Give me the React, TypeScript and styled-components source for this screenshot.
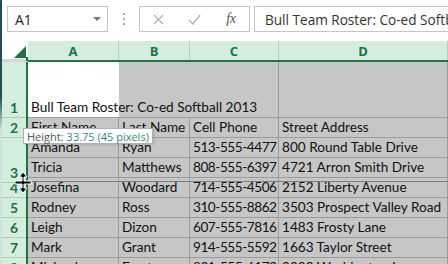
import React from 'react';
import styled, { createGlobalStyle } from 'styled-components';

const GREEN = '#217346';
const MINT = '#d3eedd';
const SEL = '#c6c6c6';
const GRID = '#9c9c9c';

const Global = createGlobalStyle`
  html, body { margin: 0; padding: 0; background: #fff; }
  * { box-sizing: border-box; }
`;

const Frame = styled.div`
  position: relative;
  width: 448px;
  height: 264px;
  overflow: hidden;
  display: flex;
  flex-direction: column;
  padding-left: 2px;
  background-color: #fff;
  background-image: linear-gradient(to bottom, #1e4c5c 0, #1e4c5c 96px, #cfe3d8 130px);
  background-size: 2px 100%;
  background-repeat: no-repeat;
  font-family: 'Open Sans', 'Liberation Sans', sans-serif;
`;

/* ---------- formula bar ---------- */

const FormulaBar = styled.div`
  height: 41px;
  flex: none;
  display: flex;
  align-items: flex-start;
  padding: 6px 0 0 5px;
`;

const Field = styled.div`
  height: 26px;
  border: 1px solid #c6c6c6;
  display: flex;
  align-items: center;
  font-size: 14px;
  color: #262626;
  white-space: nowrap;
  overflow: hidden;
`;

const NameBox = styled(Field)`
  width: 101px;
  justify-content: space-between;
  padding: 0 6px 0 7px;
`;

const Caret = styled.span`
  width: 0;
  height: 0;
  border-left: 4px solid transparent;
  border-right: 4px solid transparent;
  border-top: 4px solid #7a7a7a;
`;

const Grip = styled.div`
  width: 31px;
  height: 26px;
  display: flex;
  flex-direction: column;
  align-items: center;
  justify-content: center;
  gap: 3px;
  span {
    width: 2px;
    height: 2px;
    background: #a9a9a9;
  }
`;

const ButtonsBox = styled(Field)`
  width: 111px;
`;

const IconSlot = styled.div`
  width: 37px;
  height: 100%;
  display: flex;
  align-items: center;
  justify-content: center;
`;

const Fx = styled.span`
  font-family: 'Liberation Serif', 'DejaVu Serif', serif;
  font-style: italic;
  font-size: 14px;
  color: #555;
  letter-spacing: -0.5px;
`;

const FormulaInput = styled(Field)`
  flex: 1;
  margin-left: 4px;
  margin-right: -20px;
  padding-left: 10px;
  font-size: 13.6px;
  color: #333;
`;

/* ---------- sheet ---------- */

const Sheet = styled.div`
  flex: 1;
  display: flex;
  min-height: 0;
`;

const LeftCol = styled.div`
  width: 26px;
  flex: none;
  display: flex;
  flex-direction: column;
`;

const Corner = styled.div`
  position: relative;
  height: 21px;
  flex: none;
  background: #fff;
  border-bottom: 3px solid #d6d6d6;
  display: flex;
  justify-content: flex-end;
  align-items: flex-end;
  padding: 0 2px 1px 0;
  &::after {
    content: '';
    position: absolute;
    right: 0;
    bottom: -2px;
    width: 2px;
    height: 4px;
    background: ${GREEN};
  }
`;

const RowHeads = styled.div`
  flex: 1;
  display: flex;
  flex-direction: column;
  background: ${MINT};
  border-right: 2px solid ${GREEN};
`;

const RowHead = styled.div<{ $h: number }>`
  height: ${(p) => p.$h}px;
  flex: none;
  border-bottom: 1px solid #b3cbbd;
  display: flex;
  align-items: flex-end;
  justify-content: center;
  padding-bottom: 1px;
  font-family: 'Lato', 'Liberation Sans', sans-serif;
  font-weight: 700;
  font-size: 14px;
  line-height: 16px;
  color: ${GREEN};
`;

const Main = styled.div`
  flex: 1;
  min-width: 0;
  display: flex;
  flex-direction: column;
`;

const ColHeads = styled.div`
  height: 21px;
  flex: none;
  display: flex;
  background: ${MINT};
  border-bottom: 2px solid ${GREEN};
`;

const ColHead = styled.div<{ $w?: number }>`
  width: ${(p) => (p.$w ? `${p.$w}px` : 'auto')};
  flex: ${(p) => (p.$w ? 'none' : '1')};
  border-right: 1px solid #b8cdbf;
  display: flex;
  align-items: center;
  justify-content: center;
  font-family: 'Open Sans', 'Liberation Sans', sans-serif;
  font-weight: 700;
  font-size: 13px;
  color: ${GREEN};
`;

const Body = styled.div`
  position: relative;
  flex: 1;
  background: ${SEL};
  display: flex;
  flex-direction: column;
`;

const Row = styled.div<{ $h: number }>`
  height: ${(p) => p.$h}px;
  flex: none;
  display: flex;
  border-bottom: 1px solid ${GRID};
`;

const Cell = styled.div<{ $w?: number; $bare?: boolean; $active?: boolean; $num?: boolean }>`
  width: ${(p) => (p.$w ? `${p.$w}px` : 'auto')};
  flex: ${(p) => (p.$w ? 'none' : '1')};
  border-right: 1px solid ${(p) => (p.$bare ? 'transparent' : GRID)};
  background: ${(p) => (p.$active ? '#fff' : 'transparent')};
  display: flex;
  align-items: flex-end;
  padding: 0 2px 1px 3px;
  white-space: nowrap;
  font-family: 'Lato', 'Liberation Sans', sans-serif;
  font-size: 13.6px;
  line-height: 18px;
  letter-spacing: ${(p) => (p.$num ? '-0.45px' : '0')};
  color: #111;
`;

const DragLine = styled.div`
  position: absolute;
  left: 0;
  right: 0;
  top: 119px;
  height: 1px;
  background: #7c7c7c;
`;

const Tooltip = styled.div`
  position: absolute;
  left: 23px;
  top: 128px;
  width: 130px;
  height: 16px;
  padding: 0 3px;
  background: #fff;
  border: 1px solid #b0b0b0;
  box-shadow: 1px 1px 2px rgba(0, 0, 0, 0.15);
  display: flex;
  align-items: center;
  font-size: 11px;
  color: #4d5a5a;
  white-space: nowrap;
  span {
    color: #2f8a7c;
    margin-left: 3px;
  }
`;

const Cursor = styled.svg`
  position: absolute;
  left: 14px;
  top: 171px;
`;

const COLS = [91, 71, 89];

const DATA: string[][] = [
  ['First Name', 'Last Name', 'Cell Phone', 'Street Address'],
  ['Amanda', 'Ryan', '513-555-4477', '800 Round Table Drive'],
  ['Tricia', 'Matthews', '808-555-6397', '4721 Arron Smith Drive'],
  ['Josefina', 'Woodard', '714-555-4506', '2152 Liberty Avenue'],
  ['Rodney', 'Ross', '310-555-8862', '3503 Prospect Valley Road'],
  ['Leigh', 'Dizon', '607-555-7816', '1483 Frosty Lane'],
  ['Mark', 'Grant', '914-555-5592', '1663 Taylor Street'],
  ['Michael', 'Frost', '831-555-6173', '9000 Washington Lane'],
];

const HEADS: [string, number][] = [
  ['1', 56],
  ['2', 20],
  ['3', 45],
  ['4', 15],
  ['5', 20],
  ['6', 20],
  ['7', 20],
  ['8', 20],
];

export default function App() {
  return (
    <Frame>
      <Global />
      <FormulaBar>
        <NameBox>
          A1
          <Caret />
        </NameBox>
        <Grip>
          <span />
          <span />
          <span />
        </Grip>
        <ButtonsBox>
          <IconSlot>
            <svg width="11" height="11" viewBox="0 0 11 11">
              <path d="M1 1 L10 10 M10 1 L1 10" stroke="#b4b4b4" strokeWidth="1.3" fill="none" />
            </svg>
          </IconSlot>
          <IconSlot>
            <svg width="13" height="11" viewBox="0 0 13 11">
              <path d="M1 6 L5 10 L12 1" stroke="#b4b4b4" strokeWidth="1.4" fill="none" />
            </svg>
          </IconSlot>
          <IconSlot>
            <Fx>fx</Fx>
          </IconSlot>
        </ButtonsBox>
        <FormulaInput>Bull Team Roster: Co-ed Softball 2013</FormulaInput>
      </FormulaBar>

      <Sheet>
        <LeftCol>
          <Corner>
            <svg width="12" height="12" viewBox="0 0 12 12">
              <path d="M12 0 L12 12 L0 12 Z" fill={GREEN} />
            </svg>
          </Corner>
          <RowHeads>
            {HEADS.map(([n, h]) => (
              <RowHead key={n} $h={h}>
                {n}
              </RowHead>
            ))}
          </RowHeads>
        </LeftCol>

        <Main>
          <ColHeads>
            <ColHead $w={COLS[0]}>A</ColHead>
            <ColHead $w={COLS[1]}>B</ColHead>
            <ColHead $w={COLS[2]}>C</ColHead>
            <ColHead>D</ColHead>
          </ColHeads>
          <Body>
            <Row $h={56}>
              <Cell $w={COLS[0]} $bare $active>
                Bull Team Roster: Co-ed Softball 2013
              </Cell>
              <Cell $w={COLS[1]} $bare />
              <Cell $w={COLS[2]} />
              <Cell />
            </Row>
            {DATA.map((r, i) => (
              <Row key={i} $h={20}>
                <Cell $w={COLS[0]}>{r[0]}</Cell>
                <Cell $w={COLS[1]}>{r[1]}</Cell>
                <Cell $w={COLS[2]} $num={i > 0}>
                  {r[2]}
                </Cell>
                <Cell>{r[3]}</Cell>
              </Row>
            ))}
            <DragLine />
          </Body>
        </Main>
      </Sheet>

      <Tooltip>
        Height:<span>33.75 (45 pixels)</span>
      </Tooltip>
      <Cursor width="18" height="24" viewBox="0 0 18 24">
        <path
          d="M9 1 L13 6 L10 6 L10 10 L17 10 L17 13 L10 13 L10 17 L13 17 L9 22 L5 17 L8 17 L8 13 L1 13 L1 10 L8 10 L8 6 L5 6 Z"
          fill="#000"
          stroke="#fff"
          strokeWidth="1"
        />
      </Cursor>
    </Frame>
  );
}
